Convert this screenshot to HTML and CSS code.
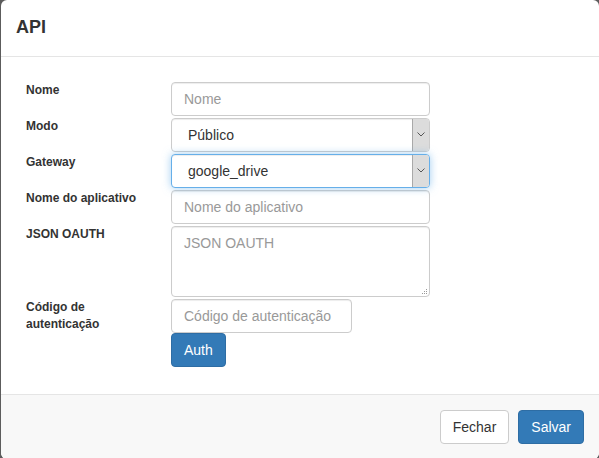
FILE: index.html
```html
<!DOCTYPE html>
<html lang="pt">
<head>
<meta charset="utf-8">
<title>API</title>
<link rel="stylesheet" href="styles.css">
</head>
<body>
<div class="modal">
  <div class="modal-header">
    <h4 class="modal-title">API</h4>
  </div>
  <div class="modal-body">
    <div class="form">
      <label class="lbl">Nome</label>
      <div class="field"><input class="ctl" type="text" placeholder="Nome"></div>

      <label class="lbl">Modo</label>
      <div class="field">
        <div class="ctl select"><span class="sel-text">Público</span>
          <span class="arrow"><svg width="8" height="5" viewBox="0 0 8 5"><path d="M0.5 0.5 L4 4 L7.5 0.5" fill="none" stroke="#555" stroke-width="1"/></svg></span>
        </div>
      </div>

      <label class="lbl">Gateway</label>
      <div class="field">
        <div class="ctl select focus"><span class="sel-text">google_drive</span>
          <span class="arrow"><svg width="8" height="5" viewBox="0 0 8 5"><path d="M0.5 0.5 L4 4 L7.5 0.5" fill="none" stroke="#555" stroke-width="1"/></svg></span>
        </div>
      </div>

      <label class="lbl">Nome do aplicativo</label>
      <div class="field"><input class="ctl" type="text" placeholder="Nome do aplicativo"></div>

      <label class="lbl">JSON OAUTH</label>
      <div class="field textarea-wrap">
        <textarea class="ctl area" placeholder="JSON OAUTH"></textarea>
        <svg class="grip" width="7" height="7" viewBox="0 0 7 7"><g fill="#999"><rect x="5" y="1" width="1" height="1"/><rect x="3" y="3" width="1" height="1"/><rect x="5" y="3" width="1" height="1"/><rect x="1" y="5" width="1" height="1"/><rect x="3" y="5" width="1" height="1"/><rect x="5" y="5" width="1" height="1"/></g></svg>
      </div>

      <label class="lbl">Código de autenticação</label>
      <div class="field stack">
        <input class="ctl short" type="text" placeholder="Código de autenticação">
        <button class="btn btn-primary">Auth</button>
      </div>
    </div>
  </div>
  <div class="modal-footer">
    <button class="btn btn-default">Fechar</button>
    <button class="btn btn-primary">Salvar</button>
  </div>
</div>
</body>
</html>
```
FILE: styles.css
```css
html, body {
  margin: 0;
  padding: 0;
  height: 100%;
  overflow: hidden;
}
body {
  background: #5c5c5c;
  font-family: "Liberation Sans", Arial, sans-serif;
  font-size: 14px;
  color: #333;
}
.modal {
  margin-left: 1px;
  width: 598px;
  height: 459px;
  background: #fff;
  border-radius: 6px;
  overflow: hidden;
  display: flex;
  flex-direction: column;
}
.modal-header {
  padding: 15px;
  border-bottom: 1px solid #e5e5e5;
}
.modal-title {
  margin: 0;
  font-size: 18px;
  font-weight: bold;
  line-height: 1.42857;
  color: #333;
}
.modal-body {
  padding: 25px 24px 27px 25px;
  flex: 1;
}
.form {
  display: grid;
  grid-template-columns: 145px 259px;
  row-gap: 2px;
}
.lbl {
  align-self: start;
  margin-top: 0;
  font-size: 12px;
  font-weight: bold;
  line-height: 17px;
  color: #333;
  padding-right: 20px;
}
.field {
  display: flex;
  flex-direction: column;
}
.ctl {
  box-sizing: border-box;
  display: block;
  width: 100%;
  height: 34px;
  margin: 0;
  padding: 6px 12px;
  font-family: "Liberation Sans", Arial, sans-serif;
  font-size: 14px;
  line-height: 20px;
  color: #555;
  background: #fff;
  border: 1px solid #ccc;
  border-radius: 4px;
  box-shadow: inset 0 1px 1px rgba(0, 0, 0, 0.075);
  outline: none;
}
.ctl::placeholder {
  color: #999;
  opacity: 1;
}
.select {
  position: relative;
  padding-left: 16px;
  color: #333;
}
.select.focus {
  border-color: #66afe9;
  box-shadow: inset 0 1px 1px rgba(0, 0, 0, 0.075), 0 0 8px rgba(102, 175, 233, 0.6);
}
.arrow {
  position: absolute;
  top: 0;
  right: 0;
  bottom: 0;
  width: 16px;
  background: #dcdcdc;
  border-left: 1px solid #a9a9a9;
  border-radius: 0 3px 3px 0;
  display: flex;
  align-items: center;
  justify-content: center;
}
.textarea-wrap {
  position: relative;
}
.area {
  height: 71px;
  resize: none;
}
.grip {
  position: absolute;
  right: 2px;
  bottom: 2px;
}
.short {
  width: 181px;
}
.stack {
  align-items: flex-start;
}
.btn {
  box-sizing: border-box;
  display: inline-block;
  height: 34px;
  padding: 6px 12px;
  font-family: "Liberation Sans", Arial, sans-serif;
  font-size: 14px;
  line-height: 20px;
  border: 1px solid transparent;
  border-radius: 4px;
  cursor: pointer;
}
.btn-primary {
  color: #fff;
  background: #337ab7;
  border-color: #2e6da4;
}
.btn-default {
  color: #333;
  background: #fff;
  border-color: #ccc;
}
.modal-footer {
  padding: 15px;
  border-top: 1px solid #e5e5e5;
  background: #f8f8f8;
  display: flex;
  justify-content: flex-end;
  gap: 9px;
}
```
